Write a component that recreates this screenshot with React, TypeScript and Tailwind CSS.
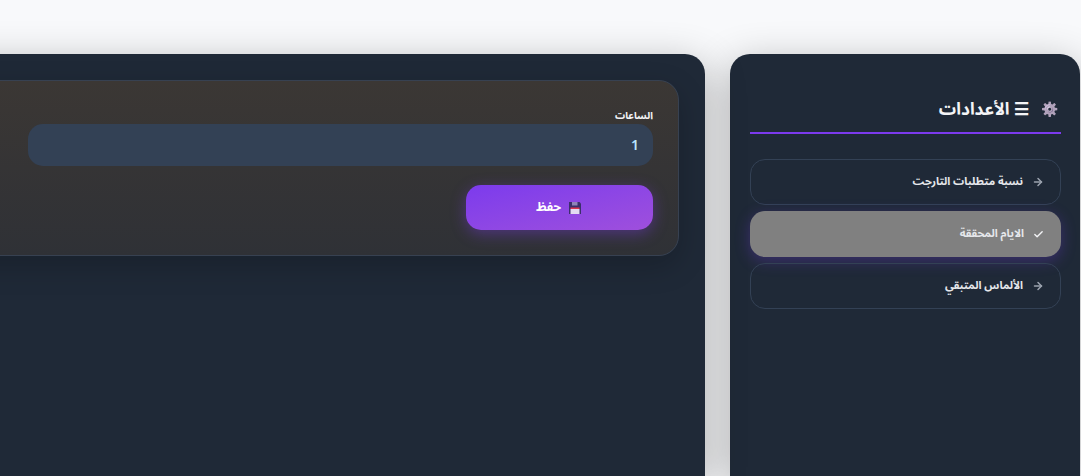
import { ArrowRight, Check } from "lucide-react"

const menuItems = [
  { label: "نسبة متطلبات التارجت", active: false },
  { label: "الايام المحققة", active: true },
  { label: "الألماس المتبقي", active: false },
]

export default function App() {
  return (
    <div
      dir="rtl"
      className="flex h-[476px] w-[1081px] gap-[25px] overflow-hidden bg-[#f8f9fb] pt-[54px] pr-px font-['Noto_Sans_Arabic','Noto_Sans',sans-serif]"
    >
      {/* Sidebar */}
      <aside className="w-[350px] shrink-0 rounded-t-[20px] bg-[#1f2937] pr-[19px] pl-[20px] pt-[40px] shadow-[0_10px_40px_rgba(0,0,0,0.3)]">
        <h2 className="flex h-[40px] items-start gap-[12px] border-b-2 border-[#7c3aed] pr-[3px] text-[17.2px] leading-[32px] font-bold text-[#f3f4f6]">
          <span className="text-[14px] leading-[32px] saturate-50 hue-rotate-[80deg]">⚙️</span>
          <span>☰ الأعدادات</span>
        </h2>
        <ul className="mt-[25px] flex flex-col gap-[6px]">
          {menuItems.map((item) => (
            <li
              key={item.label}
              className={
                item.active
                  ? "flex h-[46px] items-center gap-[9px] rounded-[15px] bg-[#808080] pr-[17px] text-[11px] font-bold text-[#e5e7eb] shadow-[0_4px_15px_rgba(124,58,237,0.3)]"
                  : "flex h-[46px] items-center gap-[9px] rounded-[15px] border border-[#334155] pr-[16px] text-[11px] font-bold text-[#e5e7eb]"
              }
            >
              {item.active ? (
                <Check size={11} strokeWidth={3} className="text-[#f3f4f6]" />
              ) : (
                <ArrowRight size={12} strokeWidth={3} className="text-[#9ca3af]" />
              )}
              <span>{item.label}</span>
            </li>
          ))}
        </ul>
      </aside>

      {/* Main panel, runs past the left edge of the window */}
      <main className="w-[900px] shrink-0 rounded-t-[20px] bg-[#1f2937] p-[26px] shadow-[0_10px_40px_rgba(0,0,0,0.3)]">
        <section className="h-[176px] rounded-[20px] border border-[#374151] bg-gradient-to-b from-[#3b3734] to-[#2f3136] p-[25px] shadow-[0_10px_30px_rgba(0,0,0,0.2)]">
          <label className="block h-[18px] pt-px text-[10px] leading-[17px] font-bold text-[#f3f4f6]">الساعات</label>
          <div className="flex h-[42px] w-[625px] items-center rounded-[15px] bg-[#334155] px-[14px] text-[14px] font-semibold text-[#bae6fd]">
            1
          </div>
          <button className="mt-[19px] flex h-[45px] w-[187px] items-center justify-center gap-[8px] rounded-[15px] bg-gradient-to-br from-[#7c3aed] to-[#9f4fdc] pr-[2px] text-[12.5px] font-bold text-white shadow-[0_4px_15px_rgba(124,58,237,0.4)]">
            <svg viewBox="0 0 12 12" className="h-[12px] w-[12px]" aria-hidden="true">
              <path d="M0 0h10.5L12 1.5V12H0z" fill="#3b2f6b" />
              <rect x="3" y="0" width="5.5" height="3.5" fill="#8f84b8" />
              <rect x="1.5" y="5.5" width="9" height="1.5" fill="#e0364f" />
              <rect x="1.5" y="7" width="9" height="5" fill="#e3d9f2" />
            </svg>
            <span>حفظ</span>
          </button>
        </section>
      </main>
    </div>
  )
}
